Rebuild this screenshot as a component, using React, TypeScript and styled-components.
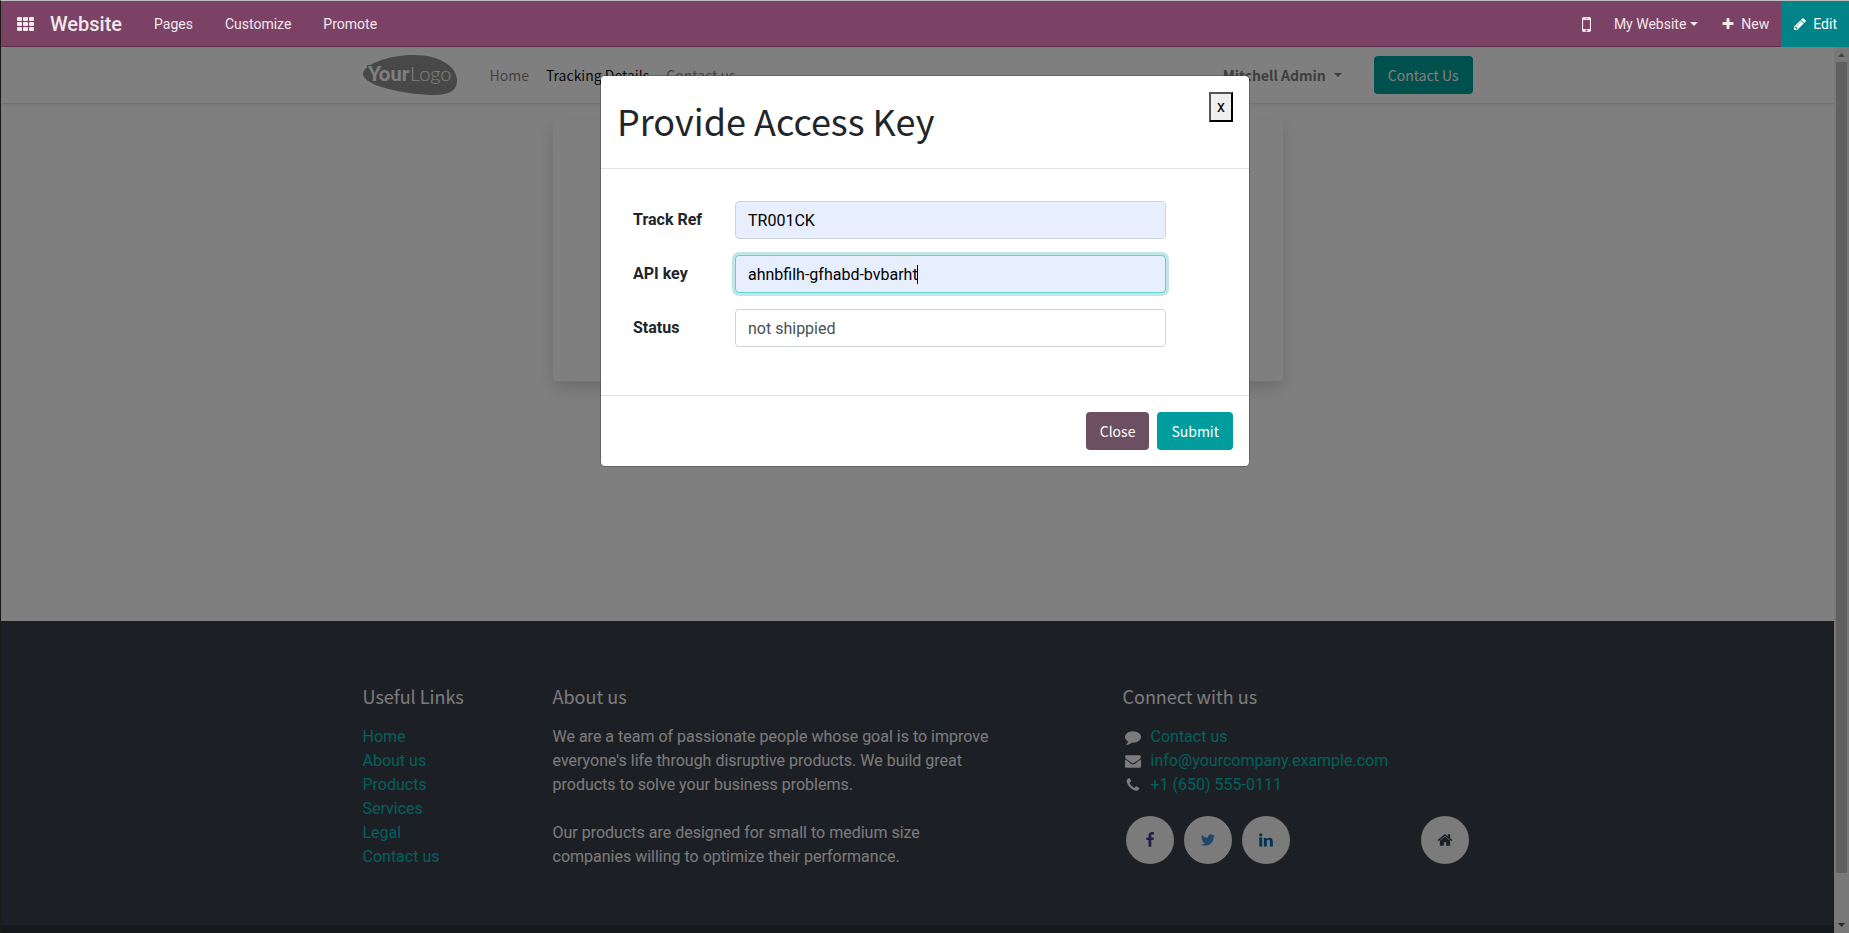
import React, { useState } from "react";
import styled, { createGlobalStyle, css } from "styled-components";

const body = `Roboto, "Liberation Sans", sans-serif`;
const heading = `"Noto Sans CJK SC", "Noto Sans", sans-serif`;

const GlobalStyle = createGlobalStyle`
  *, *::before, *::after { box-sizing: border-box; }
  body { margin: 0; background: #fff; color: #212529; font: 16px/24px ${body}; overflow: hidden; }
  a { text-decoration: none; color: inherit; }
  button, input { font: inherit; color: inherit; margin: 0; }
  h1, h2, p, ul { margin: 0; padding: 0; font-weight: 400; }
  ul { list-style: none; }
`;

const Window = styled.div`
  display: flex;
  flex-direction: column;
  height: 100vh;
  border-left: 1px solid #1a1b17;
  border-top: 1px solid #bfbfc3;
`;

/* ---------- icons ---------- */
const paths = {
  comment: "M1792 896q0 174-120 321.5t-326 233-450 85.5q-70 0-145-8-198 175-460 242-49 14-114 22h-5q-15 0-27-10.5t-16-27.5v-1q-3-4-.5-12t2-10 4.5-9.5l6-9 7-8.5 8-9q7-8 31-34.5t34.5-38 31-39.5 32.5-51 27-59 26-76q-157-89-247.5-220t-90.5-281q0-130 71-248.5t191-204.5 286-136.5 348-50.5 348 50.5 286 136.5 191 204.5 71 248.5z",
  envelope: "M1792 710v794q0 66-47 113t-113 47h-1472q-66 0-113-47t-47-113v-794q44 49 101 87 362 246 497 345 57 42 92.5 65.5t94.5 48 110 24.5h2q51 0 110-24.5t94.5-48 92.5-65.5q170-123 498-345 57-39 100-87zm0-294q0 79-49 151t-122 123q-376 261-468 325-10 7-42.5 31t-54 38.5-52 32.5-57.5 27-50 9h-2q-23 0-50-9t-57.5-27-52-32.5-54-38.5-42.5-31q-91-64-262-182.5t-205-142.5q-62-42-117-115.5t-55-136.5q0-78 41.5-130t118.5-52h1472q65 0 112.5 47t47.5 113z",
  phone: "M1600 1240q0 27-10 70.5t-21 68.5q-21 50-122 106-94 51-186 51-27 0-53-3.5t-57.5-12.5-47-14.5-55.5-20.5-49-18q-98-35-175-83-127-79-264-216t-216-264q-48-77-83-175-3-9-18-49t-20.5-55.5-14.5-47-12.5-57.5-3.5-53q0-92 51-186 56-101 106-122 25-11 68.5-21t70.5-10q14 0 21 3 18 6 53 76 11 19 30 54t35 63.5 31 53.5q3 4 17.5 25t21.5 35.5 7 28.5q0 20-28.5 50t-62 55-62 53-28.5 46q0 9 5 22.5t8.5 20.5 14 24 11.5 19q76 137 174 235t235 174q2 1 19 11.5t24 14 20.5 8.5 22.5 5q18 0 46-28.5t53-62 55-62 50-28.5q14 0 28.5 7t35.5 21.5 25 17.5q25 15 53.5 31t63.5 35 54 30q70 35 76 53 3 7 3 21z",
  home: "M1472 992v480q0 26-19 45t-45 19h-384v-384h-256v384h-384q-26 0-45-19t-19-45v-480q0-1 .5-3t.5-3l575-474 575 474q1 2 1 6zm223-69l-62 74q-8 9-21 11h-3q-13 0-21-7l-692-577-692 577q-12 8-24 7-13-2-21-11l-62-74q-8-10-7-23.5t11-21.5l719-599q32-26 76-26t76 26l244 204v-195q0-14 9-23t23-9h192q14 0 23 9t9 23v408l219 182q10 8 11 21.5t-7 23.5z",
  pencil: "M491 1536l91-91-235-235-91 91v107h128v128h107zm523-928q0-22-22-22-10 0-17 7l-542 542q-7 7-7 17 0 22 22 22 10 0 17-7l542-542q7-7 7-17zm-54-192l416 416-832 832h-416v-416zm683 96q0 53-37 90l-166 166-416-416 166-165q36-38 90-38 53 0 91 38l235 234q37 39 37 91z",
  plus: "M1600 736v192q0 40-28 68t-68 28h-416v416q0 40-28 68t-68 28h-192q-40 0-68-28t-28-68v-416h-416q-40 0-68-28t-28-68v-192q0-40 28-68t68-28h416v-416q0-40 28-68t68-28h192q40 0 68 28t28 68v416h416q40 0 68 28t28 68z",
  mobile: "M976 1408q0-33-23.5-56.5t-56.5-23.5-56.5 23.5-23.5 56.5 23.5 56.5 56.5 23.5 56.5-23.5 23.5-56.5zm208-160v-704q0-13-9.5-22.5t-22.5-9.5h-512q-13 0-22.5 9.5t-9.5 22.5v704q0 13 9.5 22.5t22.5 9.5h512q13 0 22.5-9.5t9.5-22.5zm-192-848q0-16-16-16h-160q-16 0-16 16t16 16h160q16 0 16-16zm288-16v1024q0 52-38 90t-90 38h-512q-52 0-90-38t-38-90v-1024q0-52 38-90t90-38h512q52 0 90 38t38 90z",
  facebook: "M1343 12v264h-157q-86 0-116 36t-30 108v189h293l-39 296h-254v759h-306v-759h-255v-296h255v-218q0-186 104-288.5t277-102.5q147 0 228 12z",
  twitter: "M1684 408q-67 98-162 167 1 14 1 42 0 130-38 259.5t-115.5 248.5-184.5 210.5-258 146-323 54.5q-271 0-496-145 35 4 78 4 225 0 401-138-105-2-188-64.5t-114-159.5q33 5 61 5 43 0 85-11-112-23-185.5-111.5t-73.5-205.5v-4q68 38 146 41-66-44-105-115t-39-154q0-88 44-163 121 149 294.5 238.5t371.5 99.5q-8-38-8-74 0-134 94.5-228.5t228.5-94.5q140 0 236 102 109-21 205-78-37 115-142 178 93-10 186-50z",
  linkedin: "M477 625v991h-330v-991h330zm21-306q1 73-50.5 122t-135.5 49h-2q-82 0-132-49t-50-122q0-74 51.5-122.5t134.5-48.5 133 48.5 51 122.5zm1166 729v568h-329v-530q0-105-40.5-164.5t-126.5-59.5q-63 0-105.5 34.5t-63.5 85.5q-11 30-11 81v553h-329q2-399 2-647t-1-296l-1-3h329v144h-2q20-32 41-56t56.5-52 87-43.5 114.5-15.5q171 0 275 113.5t104 332.5z",
};

const Glyph = styled.svg`
  flex: none;
  display: block;
  fill: currentColor;
`;

function Icon({ name, size }: { name: keyof typeof paths; size: number }) {
  return (
    <Glyph width={size} height={size} viewBox="0 0 1792 1792" aria-hidden="true">
      <path d={paths[name]} />
    </Glyph>
  );
}

/* ---------- backend bar ---------- */
const TopBar = styled.nav`
  display: flex;
  flex: none;
  height: 46px;
  background: #7c4265;
  box-shadow: inset 0 -1px #5b2f4a;
  color: #f0e8ed;
  font-size: 14px;
`;

const BarButton = styled.button<{ $pad?: string; $gap?: number }>`
  display: flex;
  align-items: center;
  gap: ${(p) => p.$gap ?? 0}px;
  padding: ${(p) => p.$pad ?? "0 16px"};
  border: 0;
  background: none;
  line-height: 20px;
`;

const Brand = styled.a`
  display: flex;
  align-items: center;
  padding-right: 16px;
  font-size: 20px;
  font-weight: 500;
`;

const BarRight = styled.div`
  display: flex;
  margin-left: auto;
`;

const EditButton = styled(BarButton)`
  background: #018388;
  color: #fff;
`;

/* ---------- website ---------- */
const Workspace = styled.div`
  position: relative;
  display: flex;
  flex: 1;
  min-height: 0;
`;

const Site = styled.div`
  display: flex;
  flex: 1;
  flex-direction: column;
  min-width: 0;
  overflow: hidden;
`;

const Container = styled.div`
  width: 100%;
  max-width: 1140px;
  margin: 0 auto;
  padding: 0 15px;
`;

const SiteHeader = styled.header`
  flex: none;
  box-shadow: 0 2px 4px rgba(0, 0, 0, 0.075), 0 1px rgba(0, 0, 0, 0.06);
`;

const HeaderRow = styled(Container)`
  display: flex;
  align-items: center;
  height: 56px;
`;

const LogoLink = styled.a`
  display: block;
  margin-right: 24px;
`;

const LogoMark = styled.svg`
  display: block;
`;

const Menu = styled.ul`
  display: flex;
  flex: 1;
  gap: 1px;
`;

const MenuLink = styled.a<{ $active?: boolean }>`
  display: block;
  padding: 8px;
  color: ${(p) => (p.$active ? "rgba(0,0,0,.95)" : "rgba(0,0,0,.5)")};
  font: 14px/24px ${heading};
`;

const UserMenu = styled.button`
  display: flex;
  align-items: center;
  gap: 8px;
  margin-right: 24px;
  padding: 8px;
  border: 0;
  background: none;
  color: #7c7c7c;
  font: 700 14px/24px ${heading};
`;

const Caret = styled.span`
  border: 4px solid transparent;
  border-top-color: currentColor;
  border-bottom: 0;
`;

const Button = styled.button<{ $tone: string }>`
  height: 38px;
  padding: 0 14px;
  border: 0;
  border-radius: 4px;
  background: ${(p) => p.$tone};
  color: #fff;
  font: 14px/24px ${heading};
`;

const Main = styled.main`
  flex: 1;
  padding: 16px;
`;

const Card = styled.section`
  max-width: 730px;
  height: 262px;
  margin: 0 auto;
  border-radius: 4px;
  box-shadow: 0 8px 16px rgba(0, 0, 0, 0.15);
`;

const Footer = styled.footer`
  flex: none;
  padding: 64px 0 56px;
  background: #393e46;
  color: #f6f6f7;
`;

const FooterGrid = styled.div`
  display: grid;
  grid-template-columns: 2fr 5fr 1fr 4fr;
  width: 100%;
  max-width: 1140px;
  margin: 0 auto;
`;

const FooterColumn = styled.section<{ $skip?: boolean }>`
  padding: 0 15px;
  ${(p) => p.$skip && css`grid-column: 4;`}
`;

const FooterTitle = styled.h2`
  margin-bottom: 18px;
  font: 18px/22px ${heading};
`;

const FooterLink = styled.a`
  color: #00c2bc;
`;

const Paragraph = styled.p`
  & + & { margin-top: 24px; }
`;

const ContactRow = styled.li`
  display: flex;
  align-items: center;
  gap: 10px;
  padding-left: 2px;
`;

const Socials = styled.div`
  display: flex;
  gap: 10px;
  padding: 19px 4px 0 3px;
`;

const Round = styled.a<{ $tone: string; $end?: boolean }>`
  display: grid;
  place-items: center;
  width: 48px;
  height: 48px;
  border-radius: 50%;
  background: #f6f6f6;
  color: ${(p) => p.$tone};
  margin-left: ${(p) => (p.$end ? "auto" : "0")};
`;

const Copyright = styled.div`
  flex: none;
  height: 8px;
  background: #2d3238;
`;

const ScrollTrack = styled.div`
  display: flex;
  flex: none;
  flex-direction: column;
  align-items: center;
  width: 15px;
  background: #f1f1f1;
`;

const ScrollThumb = styled.div`
  flex: 1;
  width: 11px;
  margin-bottom: 45px;
  background: #c1c1c1;
`;

const ScrollArrow = styled.svg<{ $faint?: boolean }>`
  display: block;
  fill: ${(p) => (p.$faint ? "#8a8a8a" : "#505050")};
`;

/* ---------- dialog ---------- */
const Backdrop = styled.div`
  position: absolute;
  inset: 0;
  display: flex;
  align-items: flex-start;
  justify-content: center;
  padding: 28px 16px;
  background: rgba(0, 0, 0, 0.5);
`;

const Dialog = styled.form`
  width: 100%;
  max-width: 650px;
  border: 1px solid rgba(0, 0, 0, 0.2);
  border-radius: 5px;
  background: #fff;
  background-clip: padding-box;
`;

const DialogHeader = styled.div`
  display: flex;
  align-items: flex-start;
  justify-content: space-between;
  padding: 16px;
  border-bottom: 1px solid #dee2e6;
`;

const DialogTitle = styled.h1`
  padding-bottom: 4px;
  font: 36px/56px ${heading};
`;

const DismissButton = styled.button`
  height: 30px;
  padding: 0 6px;
  border: 2px outset #000;
  background: #efefef;
  color: #000;
  font: 400 16px/24px ${body};
`;

const Fields = styled.div`
  display: grid;
  gap: 16px;
  padding: 32px 83px 48px 32px;
`;

const Field = styled.div`
  position: relative;
  display: grid;
  grid-template-columns: 102px 1fr;
  align-items: center;
`;

const Label = styled.label`
  font-weight: 700;
`;

const Input = styled.input<{ $filled?: boolean; $active?: boolean }>`
  width: 100%;
  height: 38px;
  padding: 0 12px;
  border: 1px solid #ced4da;
  border-radius: 4px;
  outline: 0;
  caret-color: transparent;
  background: ${(p) => (p.$filled ? "#e7eefe" : "#fff")};
  color: ${(p) => (p.$filled ? "#000" : "#495057")};
  ${(p) => p.$active && css`
    border-color: #5fd3d1;
    box-shadow: 0 0 0 3px #bfe7e7;
  `}
`;

const TextCursor = styled.span`
  position: absolute;
  top: 10px;
  left: 284px;
  width: 1px;
  height: 19px;
  background: #000;
  pointer-events: none;
`;

const DialogFooter = styled.div`
  display: flex;
  justify-content: flex-end;
  gap: 8px;
  padding: 16px;
  border-top: 1px solid #dee2e6;
`;

const links = ["Home", "About us", "Products", "Services", "Legal", "Contact us"];

function Logo() {
  return (
    <LogoMark width="95" height="40" viewBox="0 0 95 40" role="img" aria-label="Your Logo">
      <path d="M0 19C0 10 24 0 51 0C76 0 94 11 94 26C94 35 86 40 72 40C44 40 0 31 0 19Z" fill="#919191" />
      <path d="M4 10h9v3H4z" fill="#919191" />
      <text x="5" y="26" fill="#fff" fontFamily="Lato" fontSize="20" fontWeight="900">Your</text>
      <text x="47" y="26" fill="#fff" fontFamily="Lato" fontSize="20" fontWeight="300">Logo</text>
    </LogoMark>
  );
}

export default function App() {
  const [values, setValues] = useState({ ref: "TR001CK", key: "ahnbfilh-gfhabd-bvbarht", status: "not shippied" });
  const change = (name: string) => (e: React.ChangeEvent<HTMLInputElement>) =>
    setValues({ ...values, [name]: e.target.value });

  return (
    <Window>
      <GlobalStyle />
      <TopBar>
        <BarButton $pad="0 16px" aria-label="Applications">
          <Glyph width="17" height="14" viewBox="0 0 17 14">
            {[0, 5, 10].map((y) =>
              [0, 6, 12].map((x) => <rect key={`${x}-${y}`} x={x} y={y} width="5" height="4" rx="1" />)
            )}
          </Glyph>
        </BarButton>
        <Brand href="#">Website</Brand>
        <BarButton>Pages</BarButton>
        <BarButton>Customize</BarButton>
        <BarButton>Promote</BarButton>
        <BarRight>
          <BarButton $pad="0 6px" aria-label="Mobile preview"><Icon name="mobile" size={21} /></BarButton>
          <BarButton $pad="0 11px" $gap={4}>My Website<Caret /></BarButton>
          <BarButton $pad="0 12px" $gap={6}><Icon name="plus" size={14} />New</BarButton>
          <EditButton $pad="0 12px" $gap={6}><Icon name="pencil" size={14} />Edit</EditButton>
        </BarRight>
      </TopBar>

      <Workspace>
        <Site>
          <SiteHeader>
            <HeaderRow>
              <LogoLink href="#"><Logo /></LogoLink>
              <Menu>
                <li><MenuLink href="#">Home</MenuLink></li>
                <li><MenuLink href="#" $active>Tracking Details</MenuLink></li>
                <li><MenuLink href="#">Contact us</MenuLink></li>
              </Menu>
              <UserMenu>Mitchell Admin<Caret /></UserMenu>
              <Button $tone="#00a09d">Contact Us</Button>
            </HeaderRow>
          </SiteHeader>
          <Main><Card /></Main>
          <Footer>
            <FooterGrid>
              <FooterColumn>
                <FooterTitle>Useful Links</FooterTitle>
                <ul>{links.map((l) => <li key={l}><FooterLink href="#">{l}</FooterLink></li>)}</ul>
              </FooterColumn>
              <FooterColumn>
                <FooterTitle>About us</FooterTitle>
                <Paragraph>
                  We are a team of passionate people whose goal is to improve everyone's life through disruptive
                  products. We build great products to solve your business problems.
                </Paragraph>
                <Paragraph>
                  Our products are designed for small to medium size companies willing to optimize their performance.
                </Paragraph>
              </FooterColumn>
              <FooterColumn $skip>
                <FooterTitle>Connect with us</FooterTitle>
                <ul>
                  <ContactRow><Icon name="comment" size={16} /><FooterLink href="#">Contact us</FooterLink></ContactRow>
                  <ContactRow><Icon name="envelope" size={16} /><FooterLink href="#">info@yourcompany.example.com</FooterLink></ContactRow>
                  <ContactRow><Icon name="phone" size={16} /><FooterLink href="#">+1 (650) 555-0111</FooterLink></ContactRow>
                </ul>
                <Socials>
                  <Round href="#" $tone="#3b3f8f" aria-label="Facebook"><Icon name="facebook" size={16} /></Round>
                  <Round href="#" $tone="#3f8fd0" aria-label="Twitter"><Icon name="twitter" size={16} /></Round>
                  <Round href="#" $tone="#0068a5" aria-label="LinkedIn"><Icon name="linkedin" size={16} /></Round>
                  <Round href="#" $tone="#393e46" $end aria-label="Homepage"><Icon name="home" size={16} /></Round>
                </Socials>
              </FooterColumn>
            </FooterGrid>
          </Footer>
          <Copyright />
        </Site>
        <ScrollTrack aria-hidden="true">
          <ScrollArrow $faint width="15" height="15"><path d="M4 10h7L7.500 6z" /></ScrollArrow>
          <ScrollThumb />
          <ScrollArrow width="15" height="15"><path d="M4 5h7L7.500 9z" /></ScrollArrow>
        </ScrollTrack>

        <Backdrop>
          <Dialog role="dialog" aria-labelledby="dialog-title" onSubmit={(e) => e.preventDefault()}>
            <DialogHeader>
              <DialogTitle id="dialog-title">Provide Access Key</DialogTitle>
              <DismissButton type="button">x</DismissButton>
            </DialogHeader>
            <Fields>
              <Field>
                <Label htmlFor="ref">Track Ref</Label>
                <Input id="ref" $filled value={values.ref} onChange={change("ref")} />
              </Field>
              <Field>
                <Label htmlFor="key">API key</Label>
                <Input id="key" $filled $active value={values.key} onChange={change("key")} />
                <TextCursor />
              </Field>
              <Field>
                <Label htmlFor="status">Status</Label>
                <Input id="status" value={values.status} onChange={change("status")} />
              </Field>
            </Fields>
            <DialogFooter>
              <Button type="button" $tone="#6c5061">Close</Button>
              <Button type="submit" $tone="#009c9e">Submit</Button>
            </DialogFooter>
          </Dialog>
        </Backdrop>
      </Workspace>
    </Window>
  );
}
